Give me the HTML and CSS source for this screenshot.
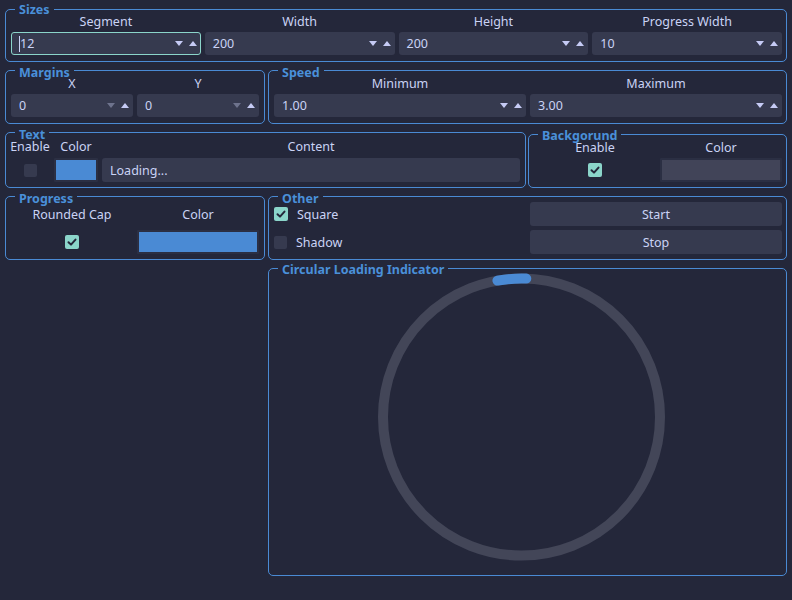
FILE: index.html
```html
<!DOCTYPE html>
<html>
<head>
<meta charset="utf-8">
<link rel="stylesheet" href="styles.css">
</head>
<body>
<div class="app">
  <section class="group sizes">
    <span class="gtitle gtitle-top">Sizes</span>
    <div class="lbl">Segment</div>
    <div class="lbl">Width</div>
    <div class="lbl">Height</div>
    <div class="lbl">Progress Width</div>
    <div class="spin focus"><span class="caret"></span><span class="val">12</span><span class="arrows"><svg width="8" height="5"><polygon points="0,0 8,0 4,5" class="ar"/></svg><svg width="8" height="5"><polygon points="0,5 8,5 4,0" class="ar"/></svg></span></div>
    <div class="spin"><span class="val">200</span><span class="arrows"><svg width="8" height="5"><polygon points="0,0 8,0 4,5" class="ar"/></svg><svg width="8" height="5"><polygon points="0,5 8,5 4,0" class="ar"/></svg></span></div>
    <div class="spin"><span class="val">200</span><span class="arrows"><svg width="8" height="5"><polygon points="0,0 8,0 4,5" class="ar"/></svg><svg width="8" height="5"><polygon points="0,5 8,5 4,0" class="ar"/></svg></span></div>
    <div class="spin"><span class="val">10</span><span class="arrows"><svg width="8" height="5"><polygon points="0,0 8,0 4,5" class="ar"/></svg><svg width="8" height="5"><polygon points="0,5 8,5 4,0" class="ar"/></svg></span></div>
  </section>

  <div class="row">
    <section class="group pair">
      <span class="gtitle">Margins</span>
      <div class="lbl">X</div>
      <div class="lbl">Y</div>
      <div class="spin"><span class="val">0</span><span class="arrows"><svg width="8" height="5"><polygon points="0,0 8,0 4,5" class="ar off"/></svg><svg width="8" height="5"><polygon points="0,5 8,5 4,0" class="ar"/></svg></span></div>
      <div class="spin"><span class="val">0</span><span class="arrows"><svg width="8" height="5"><polygon points="0,0 8,0 4,5" class="ar off"/></svg><svg width="8" height="5"><polygon points="0,5 8,5 4,0" class="ar"/></svg></span></div>
    </section>
    <section class="group pair wide">
      <span class="gtitle">Speed</span>
      <div class="lbl">Minimum</div>
      <div class="lbl">Maximum</div>
      <div class="spin"><span class="val">1.00</span><span class="arrows"><svg width="8" height="5"><polygon points="0,0 8,0 4,5" class="ar"/></svg><svg width="8" height="5"><polygon points="0,5 8,5 4,0" class="ar"/></svg></span></div>
      <div class="spin"><span class="val">3.00</span><span class="arrows"><svg width="8" height="5"><polygon points="0,0 8,0 4,5" class="ar"/></svg><svg width="8" height="5"><polygon points="0,5 8,5 4,0" class="ar"/></svg></span></div>
    </section>
  </div>

  <div class="row row-text">
    <section class="group textg">
      <span class="gtitle">Text</span>
      <div class="lbl">Enable</div>
      <div class="lbl">Color</div>
      <div class="lbl">Content</div>
      <div class="cell"><span class="cb"></span></div>
      <div class="swatch blue"></div>
      <div class="edit">Loading...</div>
    </section>
    <section class="group bgg">
      <span class="gtitle gtitle-bg">Backgorund</span>
      <div class="lbl">Enable</div>
      <div class="lbl">Color</div>
      <div class="cell"><span class="cb on"><svg width="14" height="14"><polyline points="3.5,7.2 6,9.6 10.5,4.6" class="tick"/></svg></span></div>
      <div class="swatch grey"></div>
    </section>
  </div>

  <div class="row">
    <section class="group quad">
      <span class="gtitle">Progress</span>
      <div class="lbl">Rounded Cap</div>
      <div class="lbl">Color</div>
      <div class="cell"><span class="cb on"><svg width="14" height="14"><polyline points="3.5,7.2 6,9.6 10.5,4.6" class="tick"/></svg></span></div>
      <div class="swatch blue"></div>
    </section>
    <section class="group quad wide">
      <span class="gtitle">Other</span>
      <div class="check"><span class="cb on"><svg width="14" height="14"><polyline points="3.5,7.2 6,9.6 10.5,4.6" class="tick"/></svg></span><span>Square</span></div>
      <div class="btn">Start</div>
      <div class="check"><span class="cb"></span><span>Shadow</span></div>
      <div class="btn">Stop</div>
    </section>
  </div>

  <div class="row">
    <div></div>
    <section class="group circ">
      <span class="gtitle gtitle-circ">Circular Loading Indicator</span>
      <svg class="ring" width="517" height="306" viewBox="0 0 517 306">
        <circle cx="252.5" cy="148" r="138.5" class="track"/>
        <circle cx="252.5" cy="148" r="138.5" class="arc" transform="rotate(-100 252.5 148)"/>
      </svg>
    </section>
  </div>
</div>
</body>
</html>
```

FILE: styles.css
```css
body {
  margin: 0;
  background: #24273a;
  font-family: "Noto Sans", sans-serif;
  font-size: 12.5px;
  color: #cad3f5;
}

.app {
  display: flex;
  flex-direction: column;
  gap: 8px;
  padding: 9px 5px 0 5px;
}

.row {
  display: grid;
  grid-template-columns: 260px 519px;
  column-gap: 3px;
}

.row-text {
  grid-template-columns: 521px 259px;
  column-gap: 2px;
}

.group {
  position: relative;
  border: 1px solid #4a8ad4;
  border-radius: 5px;
  display: grid;
  column-gap: 4px;
}

.gtitle {
  position: absolute;
  left: 9px;
  top: -4.5px;
  padding: 0 4px;
  background: #24273a;
  color: #4a90d9;
  font-weight: 700;
  line-height: 11px;
}

.gtitle-top {
  top: -6px;
}

.gtitle-bg,
.gtitle-circ {
  top: -5.5px;
}

.lbl {
  text-align: center;
  line-height: 14px;
  padding-top: 1px;
  white-space: nowrap;
}

.sizes {
  grid-template-columns: repeat(4, 1fr);
  grid-template-rows: 14px 23px;
  row-gap: 4px;
  padding: 4px 4px 6px 5px;
}

.pair {
  grid-template-columns: 1fr 1fr;
  grid-template-rows: 14px 23px;
  row-gap: 4px;
  padding: 5px 5px 6px 5px;
}

.pair.wide {
  padding-right: 4px;
}

.spin {
  box-sizing: border-box;
  height: 23px;
  background: #363a4f;
  border-radius: 3px;
  display: flex;
  align-items: center;
  padding: 0 4px 0 8px;
}

.spin.focus {
  border: 1px solid #8bd5ca;
  padding: 0 3px 0 7px;
}

.caret {
  width: 1px;
  height: 16px;
  background: #cad3f5;
}

.val {
  flex: 1;
}

.arrows {
  display: flex;
  gap: 6px;
  align-items: center;
}

.arrows svg {
  display: block;
}

.ar {
  fill: #c6cbf5;
}

.ar.off {
  fill: #6e738d;
}

.textg {
  grid-template-columns: 40px 44px 1fr;
  grid-template-rows: 14px 24px;
  row-gap: 5px;
  padding: 6px 5px 5px 4px;
}

.bgg {
  margin-top: 2px;
  grid-template-columns: 1fr 1fr;
  grid-template-rows: 14px 24px;
  row-gap: 4px;
  padding: 5px 4px 5px 5px;
}

.quad {
  grid-template-columns: 1fr 1fr;
  grid-template-rows: 24px 24px;
  row-gap: 4px;
  padding: 5px 5px 5px 5px;
}

.quad .lbl {
  align-self: center;
}

.quad.wide {
  padding-right: 4px;
}

.cell {
  display: flex;
  align-items: center;
  justify-content: center;
}

.cb {
  box-sizing: border-box;
  width: 13px;
  height: 13px;
  border-radius: 2px;
  background: #363a4f;
  display: inline-flex;
  align-items: center;
  justify-content: center;
  flex: none;
}

.cb.on {
  width: 14px;
  height: 14px;
  background: #8bd5ca;
}

.cb svg {
  display: block;
}

.tick {
  fill: none;
  stroke: #24273a;
  stroke-width: 2;
  stroke-linecap: round;
  stroke-linejoin: round;
}

.swatch {
  box-sizing: border-box;
  border: 2px solid #2b2f43;
  border-radius: 1px;
}

.swatch.blue {
  background: #4a8ad4;
}

.swatch.grey {
  background: #414458;
}

.edit {
  background: #363a4f;
  border-radius: 3px;
  padding-left: 8px;
  display: flex;
  align-items: center;
}

.check {
  display: flex;
  align-items: center;
  gap: 9px;
}

.btn {
  background: #363a4f;
  border-radius: 3px;
  display: flex;
  align-items: center;
  justify-content: center;
}

.circ {
  display: block;
  box-sizing: border-box;
  height: 308px;
}

.ring {
  display: block;
}

.track {
  fill: none;
  stroke: #434658;
  stroke-width: 10;
}

.arc {
  fill: none;
  stroke: #4a8ad4;
  stroke-width: 10;
  stroke-linecap: round;
  stroke-dasharray: 29 1000;
}
```
